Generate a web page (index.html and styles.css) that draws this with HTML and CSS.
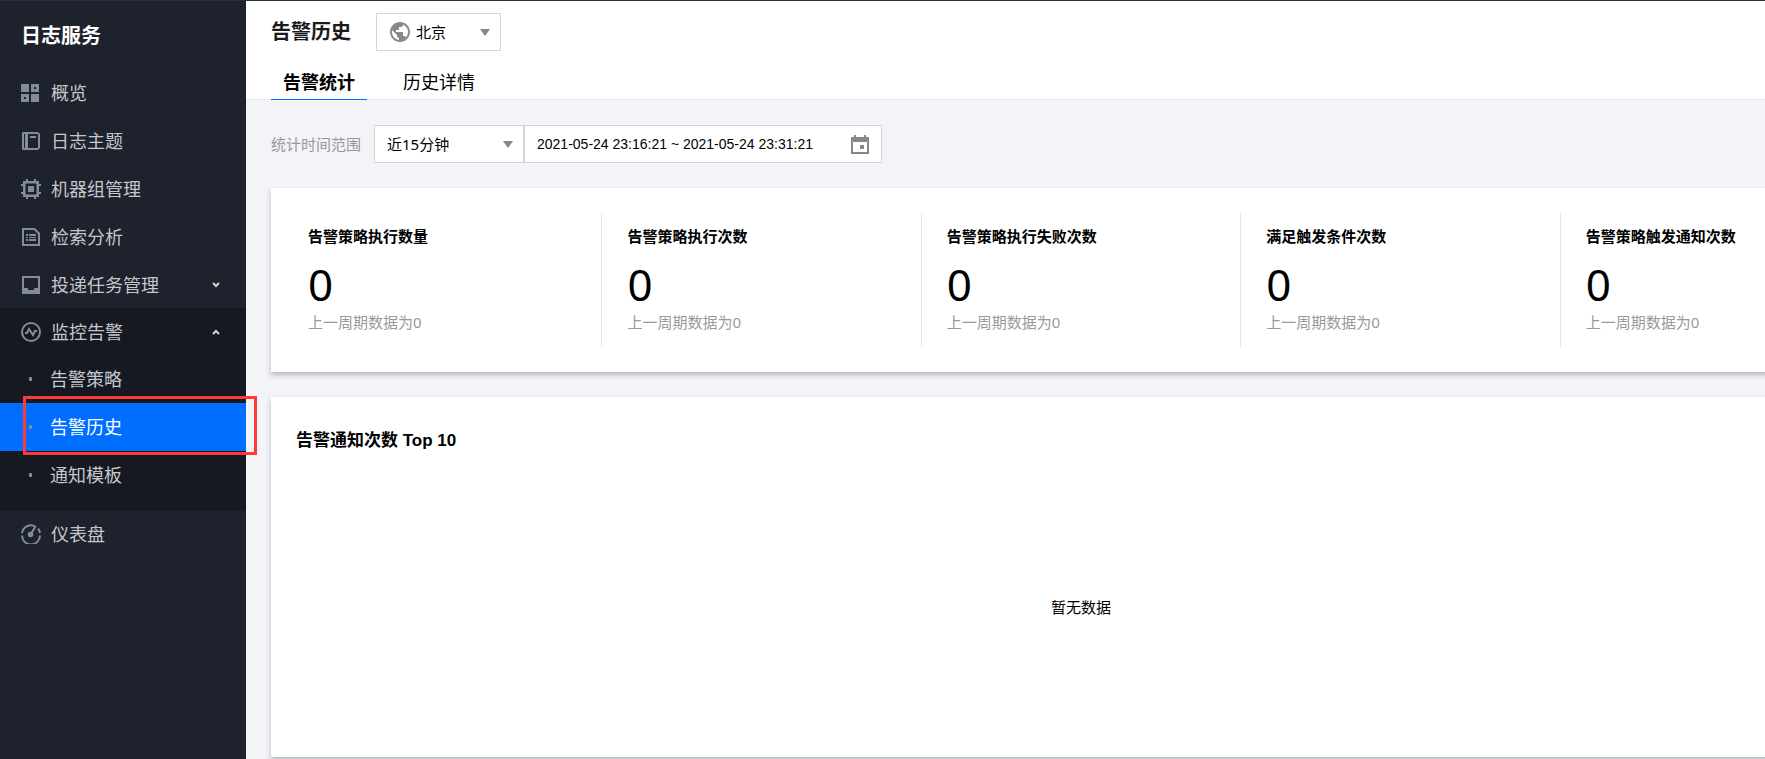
FILE: index.html
```html
<!DOCTYPE html>
<html lang="zh-CN">
<head>
<meta charset="utf-8">
<meta name="viewport" content="width=device-width, initial-scale=1">
<title>告警历史 - 日志服务</title>
<link rel="stylesheet" href="styles.css">
</head>
<body>
<div class="layout">
  <aside class="sidebar">
    <h2 class="sidebar-title">日志服务</h2>
    <nav>
      <ul class="menu">
        <li><a class="menu-item" href="#">
          <svg class="menu-icon" viewBox="0 0 20 20"><path fill-rule="evenodd" d="M0 1h8v8H0zM10 1h8v8h-8zM13 4v2h2V4zM0 11h8v8H0zM3 14v2h2v-2zM10 11h8v8h-8z"/></svg>
          概览</a></li>
        <li><a class="menu-item" href="#">
          <svg class="menu-icon" viewBox="0 0 20 20"><path fill-rule="evenodd" d="M2 1h15l2 2v14l-2 2H2l-1-1V2zM3 3v14h1V3zM7 3v14h10V3zM9 5h6v2H9z"/></svg>
          日志主题</a></li>
        <li><a class="menu-item" href="#">
          <svg class="menu-icon" viewBox="0 0 20 20"><path fill-rule="evenodd" d="M5 0h2v2h6V0h2v2h3v3h2v2h-2v6h2v2h-2v3h-3v2h-2v-2H7v2H5v-2H2v-3H0v-2h2V7H0V5h2V2h3zM5 4.500L4.500 5v10l.5.5h10l.5-.5V5l-.5-.5zM7 7h6v6H7z"/></svg>
          机器组管理</a></li>
        <li><a class="menu-item" href="#">
          <svg class="menu-icon" viewBox="0 0 20 20"><path fill-rule="evenodd" d="M1 1h13l5 5v13H1zM3 3v14h14V7l-4-4zM5 7h2v2H5zM8 7h7v2H8zM5 10h2v1H5zM8 10h7v1H8zM5 12h2v2H5zM8 12h7v2H8z"/></svg>
          检索分析</a></li>
        <li><a class="menu-item" href="#">
          <svg class="menu-icon" viewBox="0 0 20 20"><path fill-rule="evenodd" d="M1 1h18v18H1zM3 3v10h4v2h6v-2h4V3z"/></svg>
          投递任务管理
          <svg class="menu-arrow" viewBox="0 0 8 6"><path d="M1 1l3 3 3-3"/></svg></a></li>
      </ul>
      <div class="menu-group">
        <a class="menu-item menu-item-parent" href="#">
          <svg class="menu-icon" viewBox="0 0 20 20"><circle class="line" cx="10" cy="10" r="9"/><path class="line" d="M4 11h2l2-4 4 6 2-4h2"/></svg>
          监控告警
          <svg class="menu-arrow" viewBox="0 0 8 6"><path d="M1 5l3-3 3 3"/></svg></a>
        <ul class="menu">
          <li><a class="menu-item" href="#"><span class="dot"></span>告警策略</a></li>
          <li class="marked"><a class="menu-item active" href="#" aria-current="page"><span class="dot"></span>告警历史</a></li>
          <li><a class="menu-item" href="#"><span class="dot"></span>通知模板</a></li>
        </ul>
      </div>
      <a class="menu-item menu-item-last" href="#">
        <svg class="menu-icon" viewBox="0 0 20 20"><path class="line" d="M1 9a9 9 0 0 1 14-6M17 4.500A9 9 0 0 1 19 9M1 11.500a9 9 0 0 0 18 0"/><circle cx="9.500" cy="10.500" r="2.800"/><path class="line" d="M10 10l4-7"/></svg>
        仪表盘</a>
    </nav>
  </aside>

  <main class="main">
    <header class="header">
      <div class="header-row">
        <h1 class="page-title">告警历史</h1>
        <div class="picker region-picker">
          <svg class="globe" viewBox="2 2 20 20" aria-hidden="true"><path d="M12 2C6.480 2 2 6.480 2 12s4.480 10 10 10 10-4.480 10-10S17.520 2 12 2zm-1 17.930c-3.950-.49-7-3.850-7-7.930 0-.62.080-1.210.210-1.790L9 15v1c0 1.100.9 2 2 2v1.930zm6.900-2.540c-.26-.81-1-1.390-1.900-1.390h-1v-3c0-.55-.45-1-1-1H8v-2h2c.55 0 1-.45 1-1V7h2c1.100 0 2-.9 2-2v-.41c2.930 1.190 5 4.060 5 7.410 0 2.080-.8 3.970-2.100 5.390z"/></svg>
          <select class="select" aria-label="地域"><option>北京</option></select>
          <svg class="caret" viewBox="0 0 10 7" aria-hidden="true"><path d="M0 0h10L5 7z"/></svg>
        </div>
      </div>
      <div class="tabs" role="tablist">
        <button class="tab selected" role="tab" aria-selected="true">告警统计</button>
        <button class="tab" role="tab" aria-selected="false">历史详情</button>
      </div>
    </header>

    <div class="content">
      <div class="filter">
        <label class="filter-label" for="range">统计时间范围</label>
        <div class="picker range-picker">
          <select class="select" id="range"><option>近15分钟</option></select>
          <svg class="caret" viewBox="0 0 10 7" aria-hidden="true"><path d="M0 0h10L5 7z"/></svg>
        </div>
        <div class="date-picker">
          <input class="date-input" type="text" aria-label="时间区间" value="2021-05-24 23:16:21 ~ 2021-05-24 23:31:21" readonly>
          <button class="date-button" aria-label="选择日期"><svg class="calendar" viewBox="0 0 18 19"><path fill-rule="evenodd" d="M3 0h2v2h8V0h2v2h3v17H0V2h3zM2 7v10h14V7zM9 10h4v4H9z"/></svg></button>
        </div>
      </div>

      <section class="card stats">
        <div class="stat"><h3 class="stat-title">告警策略执行数量</h3><p class="stat-value">0</p><p class="stat-note">上一周期数据为0</p></div>
        <div class="stat"><h3 class="stat-title">告警策略执行次数</h3><p class="stat-value">0</p><p class="stat-note">上一周期数据为0</p></div>
        <div class="stat"><h3 class="stat-title">告警策略执行失败次数</h3><p class="stat-value">0</p><p class="stat-note">上一周期数据为0</p></div>
        <div class="stat"><h3 class="stat-title">满足触发条件次数</h3><p class="stat-value">0</p><p class="stat-note">上一周期数据为0</p></div>
        <div class="stat"><h3 class="stat-title">告警策略触发通知次数</h3><p class="stat-value">0</p><p class="stat-note">上一周期数据为0</p></div>
      </section>

      <section class="card top-list">
        <h3 class="card-title">告警通知次数 Top 10</h3>
        <p class="empty">暂无数据</p>
      </section>
    </div>
  </main>
</div>
</body>
</html>
```
FILE: styles.css
```css
* {
  box-sizing: border-box;
}

body,
h1,
h2,
h3,
p,
ul {
  margin: 0;
  padding: 0;
}

ul {
  list-style: none;
}

body {
  font: 15px/20px "Noto Sans", "Noto Sans CJK SC", sans-serif;
  color: #000;
  background: #f3f4f8;
}

button,
input,
select {
  font: inherit;
  color: inherit;
  border: 0;
  border-radius: 0;
  background: none;
}

.layout {
  display: flex;
  min-height: 100vh;
  border-top: 1px solid #262f3e;
}

/* Sidebar */
.sidebar {
  position: relative;
  z-index: 1;
  flex: none;
  width: 246px;
  background: #1e222d;
}

.sidebar-title {
  padding: 21px 21px 19px;
  font-size: 20px;
  line-height: 28px;
  color: #fff;
}

.menu-item {
  display: flex;
  align-items: center;
  gap: 10px;
  height: 48px;
  padding: 0 26px 0 21px;
  font-size: 18px;
  color: #c4c7cc;
  text-decoration: none;
}

.menu > li:last-child .menu-item,
.menu-item-parent {
  height: 47px;
}

.menu-item-last {
  height: 46px;
}

.menu-icon {
  flex: none;
  width: 20px;
  height: 20px;
  fill: #838d95;
}

.menu-icon .line {
  fill: none;
  stroke: #838d95;
  stroke-width: 2;
}

.menu-arrow {
  width: 8px;
  height: 6px;
  margin-left: auto;
  fill: none;
  stroke: #d0d4da;
  stroke-width: 2;
}

.menu-group {
  padding-bottom: 13px;
  background: #161822;
}

.dot {
  flex: none;
  width: 3px;
  height: 4px;
  margin: 0 8px;
  border-radius: 1px;
  background: #838d95;
}

.active {
  color: #fff;
  background: #006eff;
}

.marked {
  position: relative;
}

.marked::after {
  content: "";
  position: absolute;
  top: -7px;
  right: -11px;
  bottom: -4px;
  left: 23px;
  border: 3px solid #ff3838;
  pointer-events: none;
}

/* Header */
.main {
  flex: 1;
  min-width: 0;
  overflow: hidden;
}

.header {
  padding: 12px 25px 0;
  border-bottom: 1px solid #e5e8ed;
  background: #fff;
}

.header-row {
  display: flex;
  align-items: center;
  gap: 25px;
  margin-bottom: 13px;
}

.page-title {
  font-size: 20px;
  line-height: 28px;
  color: #1a1a1a;
}

.tabs {
  display: flex;
  gap: 24px;
  margin-bottom: -1px;
}

.tab {
  height: 36px;
  padding: 0 12px;
  border-bottom: 1px solid transparent;
  font-size: 18px;
}

.tab.selected {
  font-weight: 700;
  border-color: #006eff;
}

/* Drop-downs */
.picker {
  position: relative;
  height: 38px;
  border: 1px solid #cfd5de;
  background: #fff;
}

.region-picker {
  width: 125px;
}

.range-picker {
  width: 150px;
}

.select {
  width: 100%;
  height: 100%;
  padding: 0 30px 0 12px;
  appearance: none;
}

.region-picker .select {
  padding-left: 39px;
}

.globe,
.caret {
  position: absolute;
  fill: #888;
  pointer-events: none;
}

.globe {
  top: 8px;
  left: 13px;
  width: 20px;
  height: 20px;
}

.caret {
  top: 15px;
  right: 10px;
  width: 10px;
  height: 7px;
}

/* Content */
.content {
  min-width: 1670px;
  padding: 25px;
}

.filter {
  display: flex;
  align-items: center;
  margin-bottom: 25px;
}

.filter-label {
  margin-right: 13px;
  color: #999;
}

.date-picker {
  display: flex;
  align-items: center;
  width: 358px;
  height: 38px;
  border: 1px solid #cfd5de;
  background: #fff;
}

.date-input {
  flex: 1;
  min-width: 0;
  padding: 0 0 0 12px;
  font: 14px/20px "Liberation Sans", Arial, sans-serif;
}

.date-button {
  display: flex;
  padding: 0 12px;
}

.calendar {
  width: 18px;
  height: 19px;
  fill: #888;
}

.card {
  background: #fff;
  box-shadow: 0 3px 5px rgba(54, 58, 80, 0.32);
}

.stats {
  display: flex;
  margin-bottom: 25px;
  padding: 25px 12px;
}

.stat {
  flex: 1;
  padding: 13px 25px 15px;
}

.stat + .stat {
  border-left: 1px solid #e5e8ed;
}

.stat-title {
  font-size: 15px;
  line-height: 20px;
}

.stat-value {
  margin: 10px 0 0;
  font-size: 44px;
  line-height: 56px;
}

.stat-note {
  color: #999;
}

.top-list {
  display: flex;
  flex-direction: column;
  min-height: 360px;
  padding: 25px;
}

.card-title {
  padding: 7px 0 5px;
  font: 700 17px/24px "Liberation Sans", "Noto Sans CJK SC", sans-serif;
}

.empty {
  display: grid;
  flex: 1;
  place-items: center;
  padding-top: 24px;
}
```
